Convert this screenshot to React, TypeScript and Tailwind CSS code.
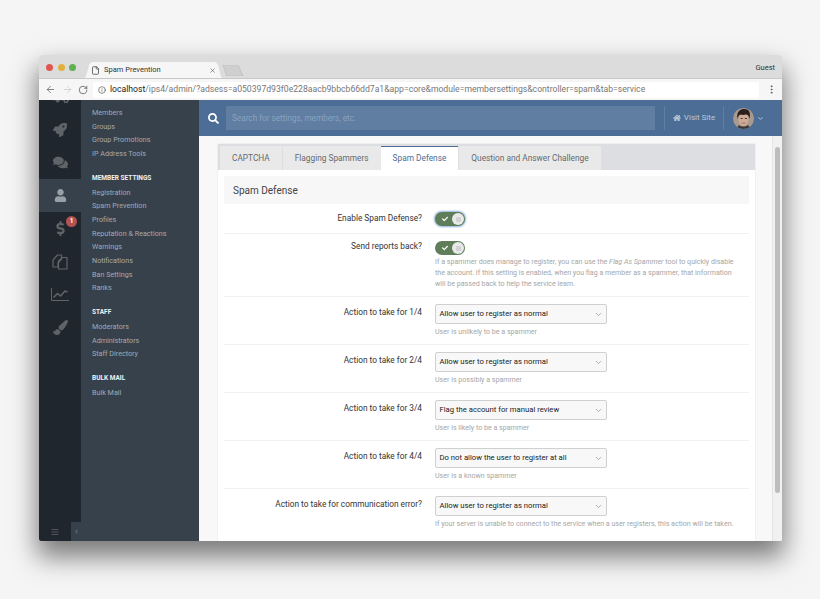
import { FaRocket, FaComments, FaUser, FaDollarSign, FaPaintBrush, FaCogs, FaHome, FaSearch, FaCheck, FaBars, FaChevronLeft } from 'react-icons/fa';
import { ArrowLeft, ArrowRight, RotateCw, Info, File, X, ChevronDown, EllipsisVertical } from 'lucide-react';

const MENU = [
  { title: '', items: ['Members', 'Groups', 'Group Promotions', 'IP Address Tools'] },
  { title: 'MEMBER SETTINGS', items: ['Registration', 'Spam Prevention', 'Profiles', 'Reputation & Reactions', 'Warnings', 'Notifications', 'Ban Settings', 'Ranks'] },
  { title: 'STAFF', items: ['Moderators', 'Administrators', 'Staff Directory'] },
  { title: 'BULK MAIL', items: ['Bulk Mail'] },
];

const CopyIcon = () => (
  <svg width="16" height="16" viewBox="0 0 16 16" fill="none" stroke="currentColor" strokeWidth="1.2" strokeLinejoin="round">
    <path d="M1 6 L5.5 1 H9.5 V5 L6 9 V13 H1 Z" />
    <path d="M6.5 7 L10.5 3.5 H15 V15 H6.5 Z" />
  </svg>
);

const ChartIcon = () => (
  <svg width="18" height="13" viewBox="0 0 18 13" fill="none" stroke="currentColor" strokeLinejoin="round">
    <path d="M0.5 0 V12.5 H18" strokeWidth="1" />
    <path d="M2.5 9.5 L6.5 5.5 L9.5 8 L14 3 L16.5 4" strokeWidth="1.6" />
  </svg>
);

const RAIL = [
  { icon: <FaCogs size={17} /> },
  { icon: <FaRocket size={14} /> },
  { icon: <FaComments size={15} /> },
  { icon: <FaUser size={13} />, active: true },
  { icon: <FaDollarSign size={15} />, badge: true },
  { icon: <CopyIcon /> },
  { icon: <ChartIcon /> },
  { icon: <FaPaintBrush size={15} /> },
];

const TABS = ['CAPTCHA', 'Flagging Spammers', 'Spam Defense', 'Question and Answer Challenge'];

const SELECTS = [
  { label: 'Action to take for 1/4', value: 'Allow user to register as normal', hint: 'User is unlikely to be a spammer' },
  { label: 'Action to take for 2/4', value: 'Allow user to register as normal', hint: 'User is possibly a spammer' },
  { label: 'Action to take for 3/4', value: 'Flag the account for manual review', hint: 'User is likely to be a spammer' },
  { label: 'Action to take for 4/4', value: 'Do not allow the user to register at all', hint: 'User is a known spammer' },
  { label: 'Action to take for communication error?', value: 'Allow user to register as normal', hint: 'If your server is unable to connect to the service when a user registers, this action will be taken.' },
];

const Toggle = ({ focused }: { focused?: boolean }) => (
  <div className={`w-[30px] h-[14px] rounded-full bg-[#5f7d58] flex items-center justify-between pl-[7px] pr-[1px] ${focused ? 'shadow-[0_0_2px_1px_#8fb0d8]' : ''}`}>
    <FaCheck size={6} className="text-white" />
    <div className="w-[12px] h-[12px] rounded-full bg-[#e9e9e9] flex items-center justify-center">
      <div className="w-[5px] h-[5px] rounded-[1px] bg-[#d2d2d2]" />
    </div>
  </div>
);

const Avatar = () => (
  <svg width="21" height="21" viewBox="0 0 21 21" className="rounded-full">
    <rect width="21" height="21" fill="#a99a8e" />
    <ellipse cx="10.5" cy="11" rx="5" ry="7" fill="#d0ab98" />
    <path d="M4.5 11 C3 3 8 1 11 1 C16 1 18 4 16.5 11 C16 8 15 6.5 13 6.5 C10 7.5 8 6.5 6.5 7 C5.5 8 5 9 4.5 11 Z" fill="#2a211e" />
    <path d="M7.5 10.5 h2.2 M11.8 10.5 h2.2" stroke="#3d2c26" strokeWidth="0.9" />
    <path d="M8.5 15 h4" stroke="#8f5f55" strokeWidth="0.8" />
    <path d="M6 17 C8 19 13 19 15 17 L18 21 H3 Z" fill="#3b3735" />
  </svg>
);

export default function App() {
  return (
    <div className="w-[820px] h-[599px] overflow-hidden bg-[#f5f5f5] pl-[39px] pt-[55px] font-['Roboto',sans-serif]">
      <div className="w-[743px] h-[486px] rounded-t-[4px] rounded-b-[2px] overflow-hidden flex flex-col shadow-[0_14px_26px_2px_rgba(0,0,0,0.5)]">
        {/* Browser title bar */}
        <div className="h-[23px] shrink-0 bg-[#dcdcdc] flex items-end relative">
          <div className="flex items-center gap-[4.5px] pl-[7px] pb-[7px] w-[44px]">
            <div className="w-[7px] h-[7px] shrink-0 rounded-full bg-[#e0574f]" />
            <div className="w-[7px] h-[7px] shrink-0 rounded-full bg-[#e0b13f]" />
            <div className="w-[7px] h-[7px] shrink-0 rounded-full bg-[#5fb04f]" />
          </div>
          <div className="relative w-[141px] h-[16px] flex items-center pl-[8px] pr-[8px] gap-[4px]">
            <svg className="absolute inset-0" width="141" height="16" viewBox="0 0 141 16">
              <path d="M0 16 C3 16 3 14 4 11 L6 3 C7 1 8 0 10 0 H131 C133 0 134 1 135 3 L137 11 C138 14 138 16 141 16 Z" fill="#f6f6f6" />
            </svg>
            <File size={9} className="relative text-[#444]" />
            <span className="relative text-[7.5px] text-[#333] flex-1 whitespace-nowrap">Spam Prevention</span>
            <X size={7} className="relative text-[#555]" />
          </div>
          <svg width="22" height="11" viewBox="0 0 22 11" className="mb-[2px] -ml-[2px]">
            <path d="M1 0 H15 C16 0 17 1 17 2 L21 11 H5 C4 11 4 10 4 9 Z" fill="#cfcfcf" stroke="#bdbdbd" strokeWidth="0.7" />
          </svg>
          <span className="absolute right-[7px] top-[8px] text-[7.5px] leading-[10px] text-[#333]">Guest</span>
        </div>

        {/* Address bar */}
        <div className="h-[22px] shrink-0 bg-[#f6f6f6] border-t border-[#c8c8c8] flex items-center">
          <div className="w-[54px] pl-[6px] flex items-center gap-[5.5px] text-[#555]">
            <ArrowLeft size={11} strokeWidth={1.5} />
            <ArrowRight size={11} strokeWidth={1.5} className="text-[#c4c4c4]" />
            <RotateCw size={10} strokeWidth={1.8} />
          </div>
          <div className="w-[666px] h-[16px] bg-white rounded-[2px] flex items-center pl-[5px] gap-[4px]">
            <Info size={8} className="text-[#555]" />
            <span className="text-[8.65px] text-[#777] whitespace-nowrap"><span className="text-[#222]">localhost</span>/ips4/admin/?adsess=a050397d93f0e228aacb9bbcb66dd7a1&amp;app=core&amp;module=membersettings&amp;controller=spam&amp;tab=service</span>
          </div>
          <EllipsisVertical size={11} className="ml-[6.5px] text-[#555]" />
        </div>

        {/* Application */}
        <div className="flex-1 min-h-0 flex">
          <div className="w-[42px] shrink-0 bg-[#20262d] flex flex-col overflow-hidden">
            <div className="flex-1 -mt-[20px]">
              {RAIL.map(({ icon, active, badge }, i) => (
                <div key={i} className={`h-[33px] flex items-center justify-center relative ${active ? 'bg-[#36414c] text-[#98a0a7]' : 'text-[#5f6469]'}`}>
                  {icon}
                  {badge && (
                    <div className="absolute right-[4px] top-[4px] w-[11px] h-[11px] rounded-full bg-[#b5514f] text-white text-[6.5px] font-bold flex items-center justify-center">1</div>
                  )}
                </div>
              ))}
            </div>
            <div className="h-[19px] flex">
              <div className="w-[32px] flex items-center justify-center text-[#50565c]"><FaBars size={8} /></div>
              <div className="w-[10px] bg-[#36414c] flex items-center justify-center text-[#6d747b]"><FaChevronLeft size={5} /></div>
            </div>
          </div>

          <div className="w-[118px] shrink-0 bg-[#36414c] pl-[11px] pt-[6px] flex flex-col gap-[10px]">
            {MENU.map((group) => (
              <div key={group.items[0]}>
                {group.title && <div className="text-[6.5px] font-bold text-[#f0f2f4] leading-[10px] mb-[3px] mt-[2px] whitespace-nowrap">{group.title}</div>}
                {group.items.map((item) => (
                  <div key={item} className="text-[7.2px] text-[#a3aab1] leading-[13.67px] whitespace-nowrap">{item}</div>
                ))}
              </div>
            ))}
          </div>

          <div className="flex-1 min-w-0 flex flex-col bg-[#f8f8f8]">
            {/* Header */}
            <div className="h-[36px] shrink-0 bg-[#4b6d96] flex items-center">
              <div className="w-[27px] pl-[1px] flex justify-center text-white"><FaSearch size={11} /></div>
              <div className="w-[429px] h-[24px] bg-[#5f7ea2] flex items-center pl-[6px] text-[8.2px] text-[#8ba3bf] whitespace-nowrap">Search for settings, members, etc.</div>
              <div className="w-px h-[24px] bg-[#5f7ea2] ml-[9px]" />
              <div className="w-[58px] flex items-center justify-center gap-[3px] text-[#b9c8d9]">
                <FaHome size={8} />
                <span className="text-[8px] whitespace-nowrap">Visit Site</span>
              </div>
              <div className="w-px h-[24px] bg-[#5f7ea2]" />
              <div className="ml-[9px] flex items-center gap-[3px]">
                <Avatar />
                <ChevronDown size={7} strokeWidth={3} className="text-[#c6d2df]" />
              </div>
            </div>

            <div className="flex-1 min-h-0 flex">
              <div className="flex-1 min-w-0 pl-[19px] pr-[17px] pt-[8px] overflow-hidden">
                <div className="bg-white h-full shadow-[0_0_1px_#c9c9c9]">
                  {/* Tabs */}
                  <div className="h-[26px] bg-[#dddee1] flex items-end pl-[1px]">
                    {TABS.map((tab) => tab === 'Spam Defense' ? (
                      <div key={tab} className="h-[24px] px-[12px] bg-white border-t border-[#4b6d96] flex items-center text-[8.3px] text-[#4b6d96] whitespace-nowrap">{tab}</div>
                    ) : (
                      <div key={tab} className="h-[24px] px-[12px] bg-[#e9e9ea] border-l border-[#dddee1] flex items-center text-[8.3px] text-[#66696d] whitespace-nowrap">{tab}</div>
                    ))}
                  </div>
                  <div className="px-[6px] pt-[6px]">
                    <div className="h-[28px] bg-[#f7f7f7] flex items-center pl-[9px] text-[10px] text-[#444]">Spam Defense</div>
                    <div className="h-[30px] flex border-b border-[#f1f1f1]">
                      <div className="w-[198px] text-right text-[8.3px] text-[#333] pt-[9px] leading-[11px]">Enable Spam Defense?</div>
                      <div className="pl-[13px] pt-[8px]"><Toggle focused /></div>
                    </div>
                    <div className="h-[63px] flex border-b border-[#f1f1f1]">
                      <div className="w-[198px] text-right text-[8.3px] text-[#333] pt-[7px] leading-[11px]">Send reports back?</div>
                      <div className="pl-[13px] pt-[7px] flex-1">
                        <Toggle />
                        <p className="text-[7.1px] text-[#a6a6a6] leading-[11px] mt-[1px] w-[304px]">If a spammer does manage to register, you can use the <i>Flag As Spammer</i> tool to quickly disable the account. If this setting is enabled, when you flag a member as a spammer, that information will be passed back to help the service learn.</p>
                      </div>
                    </div>
                    {SELECTS.map((row, i) => (
                      <div key={row.label} className={`h-[48px] flex ${i < SELECTS.length - 1 ? 'border-b border-[#f1f1f1]' : ''}`}>
                        <div className="w-[198px] text-right text-[8.3px] text-[#333] pt-[10px] leading-[11px] whitespace-nowrap">{row.label}</div>
                        <div className="pl-[13px] pt-[7px]">
                          <div className="w-[172px] h-[20px] rounded-[2px] border border-[#d0d0d0] bg-[#f8f8f8] flex items-center justify-between pl-[3.5px] pr-[3px] text-[7.7px] text-[#222] whitespace-nowrap">
                            {row.value}
                            <ChevronDown size={9} className="text-[#999]" />
                          </div>
                          <div className="text-[7.1px] text-[#a6a6a6] leading-[10px] mt-[3px] whitespace-nowrap">{row.hint}</div>
                        </div>
                      </div>
                    ))}
                  </div>
                </div>
              </div>
              <div className="w-[10px] shrink-0 bg-[#f1f1f1] border-l border-[#e4e4e4] pl-[2px] pt-[11px]">
                <div className="w-[5px] h-[346px] rounded-full bg-[#bdbdbd]" />
              </div>
            </div>
          </div>
        </div>
      </div>
    </div>
  );
}
